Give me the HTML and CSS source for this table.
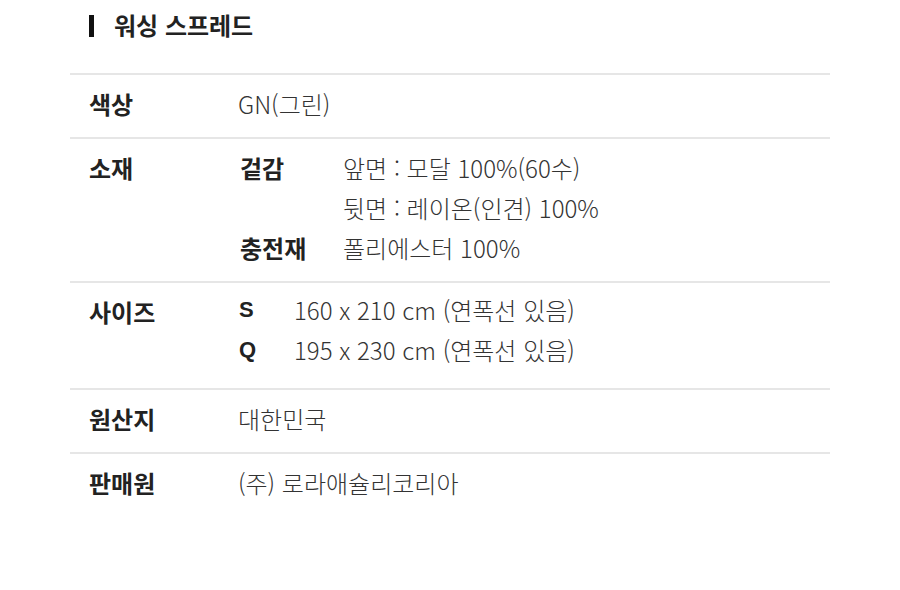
FILE: index.html
```html
<!DOCTYPE html>
<html lang="ko">
<head>
<meta charset="utf-8">
<link rel="stylesheet" href="styles.css">
</head>
<body>
<div class="wrap">
  <h2 class="title"><span class="bar"></span>워싱 스프레드</h2>
  <div class="table">
    <div class="row">
      <div class="label">색상</div>
      <div class="value">GN(그린)</div>
    </div>
    <div class="row">
      <div class="label">소재</div>
      <div class="value sub">
        <div class="sublabel">겉감</div>
        <div class="subvalue">앞면 : 모달 100%(60수)<br>뒷면 : 레이온(인견) 100%</div>
        <div class="sublabel">충전재</div>
        <div class="subvalue">폴리에스터 100%</div>
      </div>
    </div>
    <div class="row size-row">
      <div class="label">사이즈</div>
      <div class="value size">
        <div class="code">S</div>
        <div class="dim">160 x 210 cm (연폭선 있음)</div>
        <div class="code">Q</div>
        <div class="dim">195 x 230 cm (연폭선 있음)</div>
      </div>
    </div>
    <div class="row">
      <div class="label">원산지</div>
      <div class="value">대한민국</div>
    </div>
    <div class="row last">
      <div class="label">판매원</div>
      <div class="value">(주) 로라애슐리코리아</div>
    </div>
  </div>
</div>
</body>
</html>
```
FILE: styles.css
```css
html, body {
  margin: 0;
  padding: 0;
  background: #fff;
}
body {
  font-family: "Noto Sans CJK KR", "Noto Sans", sans-serif;
  color: #333;
}
.wrap {
  width: 760px;
  margin-left: 70px;
}
.title {
  display: flex;
  align-items: flex-start;
  margin: 0;
  padding: 9px 0 0 19px;
  height: 73px;
  box-sizing: border-box;
  font-size: 24px;
  font-weight: 700;
  color: #222;
  line-height: 32px;
}
.bar {
  display: inline-block;
  width: 5px;
  height: 22px;
  background: #111;
  margin: 6px 20px 0 0;
}
.table {
  border-top: 2px solid #e6e6e6;
}
.row {
  display: grid;
  grid-template-columns: 149px 1fr;
  padding: 9px 0 13px 19px;
  border-bottom: 2px solid #e6e6e6;
  line-height: 40px;
  font-size: 24px;
}
.row.size-row {
  padding-top: 7px;
  padding-bottom: 18px;
}
.row.size-row .label {
  padding-top: 2px;
}
.row.last {
  border-bottom: none;
}
.label {
  font-weight: 700;
  color: #222;
}
.value {
  font-weight: 300;
  color: #333;
}
.sub {
  display: grid;
  grid-template-columns: 105px 1fr;
}
.sublabel {
  font-weight: 700;
  color: #222;
  padding-left: 2px;
}
.size {
  display: grid;
  grid-template-columns: 56px 1fr;
}
.code {
  font-family: "Liberation Sans", Arial, sans-serif;
  font-weight: 700;
  color: #222;
  font-size: 22px;
  padding-left: 1px;
}
.dim {
  font-weight: 300;
}
```
